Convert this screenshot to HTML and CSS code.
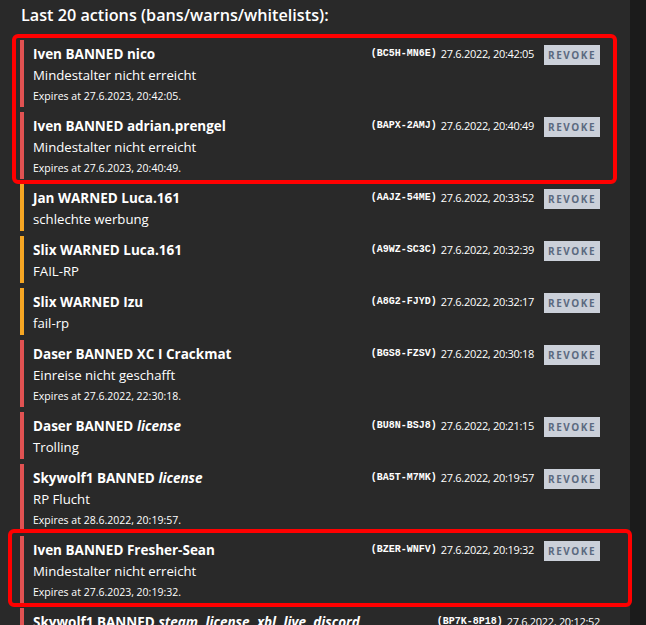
FILE: index.html
```html
<!doctype html>
<html lang="en">
<head>
<meta charset="utf-8">
<title>Last actions</title>
<link rel="stylesheet" href="styles.css">
</head>
<body>

<main class="panel">
	<h2>Last 20 actions (bans/warns/whitelists):</h2>

	<div class="actions">
		<div class="action action--ban">
			<div class="action__head">
				<div class="action__title">Iven BANNED nico</div>
				<div class="action__meta"><span class="action__id">(BC5H-MN6E)</span> <span class="action__date">27.6.2022, 20:42:05</span><button type="button" class="revoke">REVOKE</button></div>
			</div>
			<div class="action__reason">Mindestalter nicht erreicht</div>
			<div class="action__expires">Expires at 27.6.2023, 20:42:05.</div>
		</div>

		<div class="action action--ban">
			<div class="action__head">
				<div class="action__title">Iven BANNED adrian.prengel</div>
				<div class="action__meta"><span class="action__id">(BAPX-2AMJ)</span> <span class="action__date">27.6.2022, 20:40:49</span><button type="button" class="revoke">REVOKE</button></div>
			</div>
			<div class="action__reason">Mindestalter nicht erreicht</div>
			<div class="action__expires">Expires at 27.6.2023, 20:40:49.</div>
		</div>

		<div class="action action--warn">
			<div class="action__head">
				<div class="action__title">Jan WARNED Luca.161</div>
				<div class="action__meta"><span class="action__id">(AAJZ-54ME)</span> <span class="action__date">27.6.2022, 20:33:52</span><button type="button" class="revoke">REVOKE</button></div>
			</div>
			<div class="action__reason">schlechte werbung</div>
		</div>

		<div class="action action--warn">
			<div class="action__head">
				<div class="action__title">Slix WARNED Luca.161</div>
				<div class="action__meta"><span class="action__id">(A9WZ-SC3C)</span> <span class="action__date">27.6.2022, 20:32:39</span><button type="button" class="revoke">REVOKE</button></div>
			</div>
			<div class="action__reason">FAIL-RP</div>
		</div>

		<div class="action action--warn">
			<div class="action__head">
				<div class="action__title">Slix WARNED Izu</div>
				<div class="action__meta"><span class="action__id">(A8G2-FJYD)</span> <span class="action__date">27.6.2022, 20:32:17</span><button type="button" class="revoke">REVOKE</button></div>
			</div>
			<div class="action__reason">fail-rp</div>
		</div>

		<div class="action action--ban">
			<div class="action__head">
				<div class="action__title">Daser BANNED XC I Crackmat</div>
				<div class="action__meta"><span class="action__id">(BGS8-FZSV)</span> <span class="action__date">27.6.2022, 20:30:18</span><button type="button" class="revoke">REVOKE</button></div>
			</div>
			<div class="action__reason">Einreise nicht geschafft</div>
			<div class="action__expires">Expires at 27.6.2022, 22:30:18.</div>
		</div>

		<div class="action action--ban">
			<div class="action__head">
				<div class="action__title">Daser BANNED <em>license</em></div>
				<div class="action__meta"><span class="action__id">(BU8N-BSJ8)</span> <span class="action__date">27.6.2022, 20:21:15</span><button type="button" class="revoke">REVOKE</button></div>
			</div>
			<div class="action__reason">Trolling</div>
		</div>

		<div class="action action--ban">
			<div class="action__head">
				<div class="action__title">Skywolf1 BANNED <em>license</em></div>
				<div class="action__meta"><span class="action__id">(BA5T-M7MK)</span> <span class="action__date">27.6.2022, 20:19:57</span><button type="button" class="revoke">REVOKE</button></div>
			</div>
			<div class="action__reason">RP Flucht</div>
			<div class="action__expires">Expires at 28.6.2022, 20:19:57.</div>
		</div>

		<div class="action action--ban">
			<div class="action__head">
				<div class="action__title">Iven BANNED Fresher-Sean</div>
				<div class="action__meta"><span class="action__id">(BZER-WNFV)</span> <span class="action__date">27.6.2022, 20:19:32</span><button type="button" class="revoke">REVOKE</button></div>
			</div>
			<div class="action__reason">Mindestalter nicht erreicht</div>
			<div class="action__expires">Expires at 27.6.2023, 20:19:32.</div>
		</div>

		<div class="action action--ban">
			<div class="action__head">
				<div class="action__title">Skywolf1 BANNED <em>steam, license, xbl, live, discord,</em></div>
				<div class="action__meta action__meta--wrap"><span class="action__id">(BP7K-8P18)</span> <span class="action__date">27.6.2022, 20:12:52</span><button type="button" class="revoke">REVOKE</button></div>
			</div>
			<div class="action__reason">Cheating</div>
		</div>
	</div>

	<div class="mark mark--top"></div>
	<div class="mark mark--bottom"></div>
</main>

<div class="scrollbar"></div>

</body>
</html>
```

FILE: styles.css
```css
body {
	margin: 0;
	display: flex;
	height: 625px;
	overflow: hidden;
	background: #1b1b1b;
	color: #fff;
	font-family: 'Open Sans', 'Noto Sans', sans-serif;
	font-size: 13.2px;
}

.panel {
	position: relative;
	flex: 1 1 auto;
	padding: 0 22px 0 20px;
	background: #292929;
}

.scrollbar {
	flex: 0 0 16px;
	background: #1b1b1b;
}

h2 {
	margin: 3px 0 13px 1px;
	font-size: 16.2px;
	font-weight: 600;
	line-height: 24px;
}

.actions {
	display: flex;
	flex-direction: column;
	gap: 5px;
}

.action {
	padding: 4px 8px 1px 9px;
	border-left: 4px solid #e05252;
}
.action--warn {
	border-left-color: #f5a623;
}

.action__head {
	display: flex;
	justify-content: space-between;
	align-items: flex-start;
	height: 20px;
}

.action__title {
	font-size: 13.5px;
	font-weight: 700;
	line-height: 20px;
	white-space: nowrap;
}

.action__meta {
	display: flex;
	align-items: flex-start;
	line-height: 20px;
	white-space: nowrap;
}
.action__meta--wrap {
	flex-wrap: wrap;
	justify-content: flex-end;
	width: 164px;
}

.action__id {
	margin-right: 4px;
	font-family: 'Liberation Mono', monospace;
	font-size: 10px;
	font-weight: 700;
}

.action__date {
	font-size: 11px;
	letter-spacing: -0.3px;
}

.revoke {
	margin: 1px 0 0 10px;
	padding: 0 4px;
	height: 20px;
	border: 0;
	border-radius: 0;
	background: #cbd0d9;
	color: #5b6a80;
	font-family: 'Open Sans', sans-serif;
	font-size: 10px;
	font-weight: 700;
	letter-spacing: 1.5px;
}

.action__reason {
	line-height: 22px;
}

.action__expires {
	font-size: 10.5px;
	line-height: 20px;
}

.mark {
	position: absolute;
	border: 4px solid #ff0000;
	border-radius: 6px;
	pointer-events: none;
}
.mark--top {
	left: 12px;
	top: 34px;
	width: 597px;
	height: 142px;
}
.mark--bottom {
	left: 8px;
	top: 529px;
	width: 616px;
	height: 70px;
}
```
